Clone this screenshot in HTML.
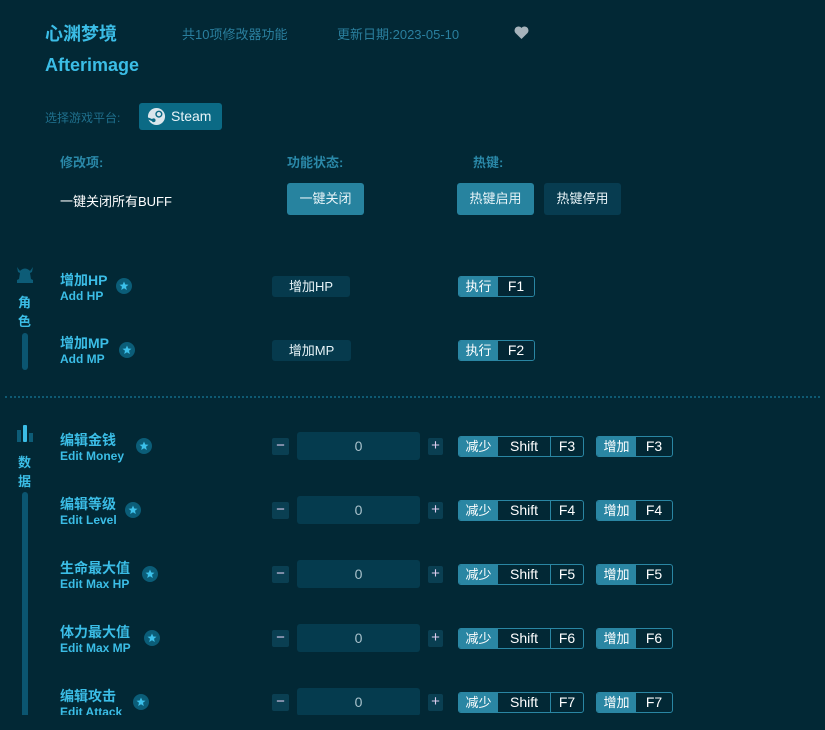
<!DOCTYPE html>
<html><head><meta charset="utf-8"><style>
*{margin:0;padding:0;box-sizing:border-box}
body{width:825px;height:730px;background:#022835;position:relative;overflow:hidden;font-family:"Liberation Sans","Noto Sans CJK SC",sans-serif;color:#fff}
.a{position:absolute;white-space:nowrap}
.cy{color:#3bbde6;font-weight:bold}
.hd{color:#2a88a8;font-weight:bold;font-size:13px}
.btn{position:absolute;border-radius:3px;color:#e8f4f8;font-size:13px;text-align:center}
.star{position:absolute;width:16px;height:16px;border-radius:50%;background:#0b5d78}
.star svg{position:absolute;left:3px;top:3px}
.hk{position:absolute;height:21px;border:1px solid #2a86a3;border-radius:3px;display:flex;font-size:14px;overflow:hidden}
.hk span{display:block;text-align:center;line-height:19px;color:#fff}
.hk .l{background:#2a86a3;font-size:13px}
.hk .s{border-left:1px solid #2a86a3}
.pm{position:absolute;width:17px;height:17px;background:#0a3f52;border-radius:2px;color:#dce;font-size:15px;text-align:center;line-height:16px}
.inp{position:absolute;width:123px;height:28px;background:#053b4e;border-radius:3px;color:#a9c2cc;font-size:14px;text-align:center;line-height:28px}
</style></head><body>
<div class="a cy" style="left:45px;top:20px;font-size:18px">心渊梦境</div>
<div class="a" style="left:182px;top:24px;font-size:13px;color:#2a7f9e">共10项修改器功能</div>
<div class="a" style="left:337px;top:24px;font-size:13px;color:#2a7f9e">更新日期:2023-05-10</div>
<svg class="a" style="left:514px;top:26px" width="15" height="13" viewBox="0 0 16 14"><path d="M8 14 L1.5 7.5 A3.8 3.8 0 0 1 8 2 A3.8 3.8 0 0 1 14.5 7.5 Z" fill="#a6b3bb"/></svg>
<div class="a cy" style="left:45px;top:55px;font-size:18px">Afterimage</div>
<div class="a" style="left:45px;top:109px;font-size:12px;color:#1f6f8c">选择游戏平台:</div>
<div class="btn" style="left:139px;top:103px;width:83px;height:27px;background:#0b6a85;line-height:27px;font-size:14px;text-align:left;padding-left:32px">Steam</div>
<svg class="a" style="left:147px;top:107px" width="19" height="19" viewBox="0 0 20 20"><circle cx="10" cy="10" r="9" fill="#dbe6ec"/><circle cx="12.5" cy="7.5" r="3" fill="none" stroke="#0b6a85" stroke-width="1.5"/><path d="M1 12 L7 14.5" stroke="#0b6a85" stroke-width="2"/><circle cx="7" cy="14" r="2" fill="#0b6a85"/></svg>
<div class="a hd" style="left:60px;top:152px">修改项:</div>
<div class="a hd" style="left:287px;top:152px">功能状态:</div>
<div class="a hd" style="left:473px;top:152px">热键:</div>
<div class="a" style="left:60px;top:191px;font-size:13px">一键关闭所有BUFF</div>
<div class="btn" style="left:287px;top:183px;width:77px;height:32px;line-height:32px;background:#27839f">一键关闭</div>
<div class="btn" style="left:457px;top:183px;width:77px;height:32px;line-height:32px;background:#27839f">热键启用</div>
<div class="btn" style="left:544px;top:183px;width:77px;height:32px;line-height:32px;background:#073c50">热键停用</div>

<svg class="a" style="left:16px;top:266px" width="18" height="17" viewBox="0 0 18 17"><path d="M1 1 L4 5 L5 4 Q9 1 13 4 L14 5 L17 1 L16 6 L14 7 L15 13 L17 14 L17 17 L1 17 L1 14 L3 13 L4 7 L2 6 Z" fill="#0d5c77"/></svg>
<div class="a cy" style="left:18px;top:292px;font-size:13px">角</div>
<div class="a cy" style="left:18px;top:311px;font-size:13px">色</div>
<div class="a" style="left:22px;top:333px;width:6px;height:37px;border-radius:3px;background:#0b5570"></div>

<div class="a cy" style="left:60px;top:270px;font-size:14px">增加HP</div>
<div class="a cy" style="left:60px;top:289px;font-size:12px">Add HP</div>
<div class="star" style="left:116px;top:278px"><svg width="10" height="10" viewBox="0 0 10 10"><path d="M5 0.5 6.3 3.5 9.5 3.7 7 5.8 7.8 9 5 7.3 2.2 9 3 5.8 0.5 3.7 3.7 3.5Z" fill="#3cc0ea"/></svg></div>
<div class="btn" style="left:272px;top:276px;width:78px;height:21px;line-height:21px;background:#063a4d">增加HP</div>
<div class="hk" style="left:458px;top:276px;width:77px"><span class="l" style="width:39px">执行</span><span style="flex:1;background:#032735">F1</span></div>

<div class="a cy" style="left:60px;top:333px;font-size:14px">增加MP</div>
<div class="a cy" style="left:60px;top:352px;font-size:12px">Add MP</div>
<div class="star" style="left:119px;top:342px"><svg width="10" height="10" viewBox="0 0 10 10"><path d="M5 0.5 6.3 3.5 9.5 3.7 7 5.8 7.8 9 5 7.3 2.2 9 3 5.8 0.5 3.7 3.7 3.5Z" fill="#3cc0ea"/></svg></div>
<div class="btn" style="left:272px;top:340px;width:79px;height:21px;line-height:21px;background:#063a4d">增加MP</div>
<div class="hk" style="left:458px;top:340px;width:77px"><span class="l" style="width:39px">执行</span><span style="flex:1;background:#032735">F2</span></div>

<div class="a" style="left:5px;top:396px;width:815px;border-top:2px dotted #0e5a73"></div>

<svg class="a" style="left:16px;top:424px" width="18" height="18" viewBox="0 0 18 18"><rect x="1" y="6" width="4" height="12" fill="#0d5c77"/><rect x="7" y="1" width="4" height="17" rx="1" fill="#3bbde6"/><rect x="13" y="9" width="4" height="9" fill="#0d5c77"/></svg>
<div class="a cy" style="left:18px;top:452px;font-size:13px">数</div>
<div class="a cy" style="left:18px;top:471px;font-size:13px">据</div>
<div class="a" style="left:22px;top:492px;width:6px;height:223px;border-radius:3px 3px 0 0;background:#0b5570"></div>

<div id="rows"></div>
<script>
var R=[["编辑金钱","Edit Money",144,"F3"],["编辑等级","Edit Level",133,"F4"],["生命最大值","Edit Max HP",150,"F5"],["体力最大值","Edit Max MP",152,"F6"],["编辑攻击","Edit Attack",141,"F7"]];
var h="";var st='<svg width="10" height="10" viewBox="0 0 10 10"><path d="M5 0.5 6.3 3.5 9.5 3.7 7 5.8 7.8 9 5 7.3 2.2 9 3 5.8 0.5 3.7 3.7 3.5Z" fill="#3cc0ea"/></svg>';
R.forEach(function(r,i){var c=446+64*i;
h+='<div class="a cy" style="left:60px;top:'+(c-16)+'px;font-size:14px">'+r[0]+'</div>';
h+='<div class="a cy" style="left:60px;top:'+(c+3)+'px;font-size:12px">'+r[1]+'</div>';
h+='<div class="star" style="left:'+(r[2]-8)+'px;top:'+(c-8)+'px">'+st+'</div>';
h+='<div class="pm" style="left:272px;top:'+(c-8)+'px">−</div>';
h+='<div class="inp" style="left:297px;top:'+(c-14)+'px">0</div>';
h+='<div class="pm" style="left:428px;top:'+(c-8)+'px;width:15px">+</div>';
h+='<div class="hk" style="left:458px;top:'+(c-10)+'px;width:126px"><span class="l" style="width:39px">减少</span><span style="width:52px">Shift</span><span class="s" style="flex:1">'+r[3]+'</span></div>';
h+='<div class="hk" style="left:596px;top:'+(c-10)+'px;width:77px"><span class="l" style="width:39px">增加</span><span style="flex:1">'+r[3]+'</span></div>';
});
document.getElementById("rows").innerHTML=h;
</script>
<div class="a" style="left:0;top:715px;width:825px;height:15px;background:#022835"></div>
</body></html>
